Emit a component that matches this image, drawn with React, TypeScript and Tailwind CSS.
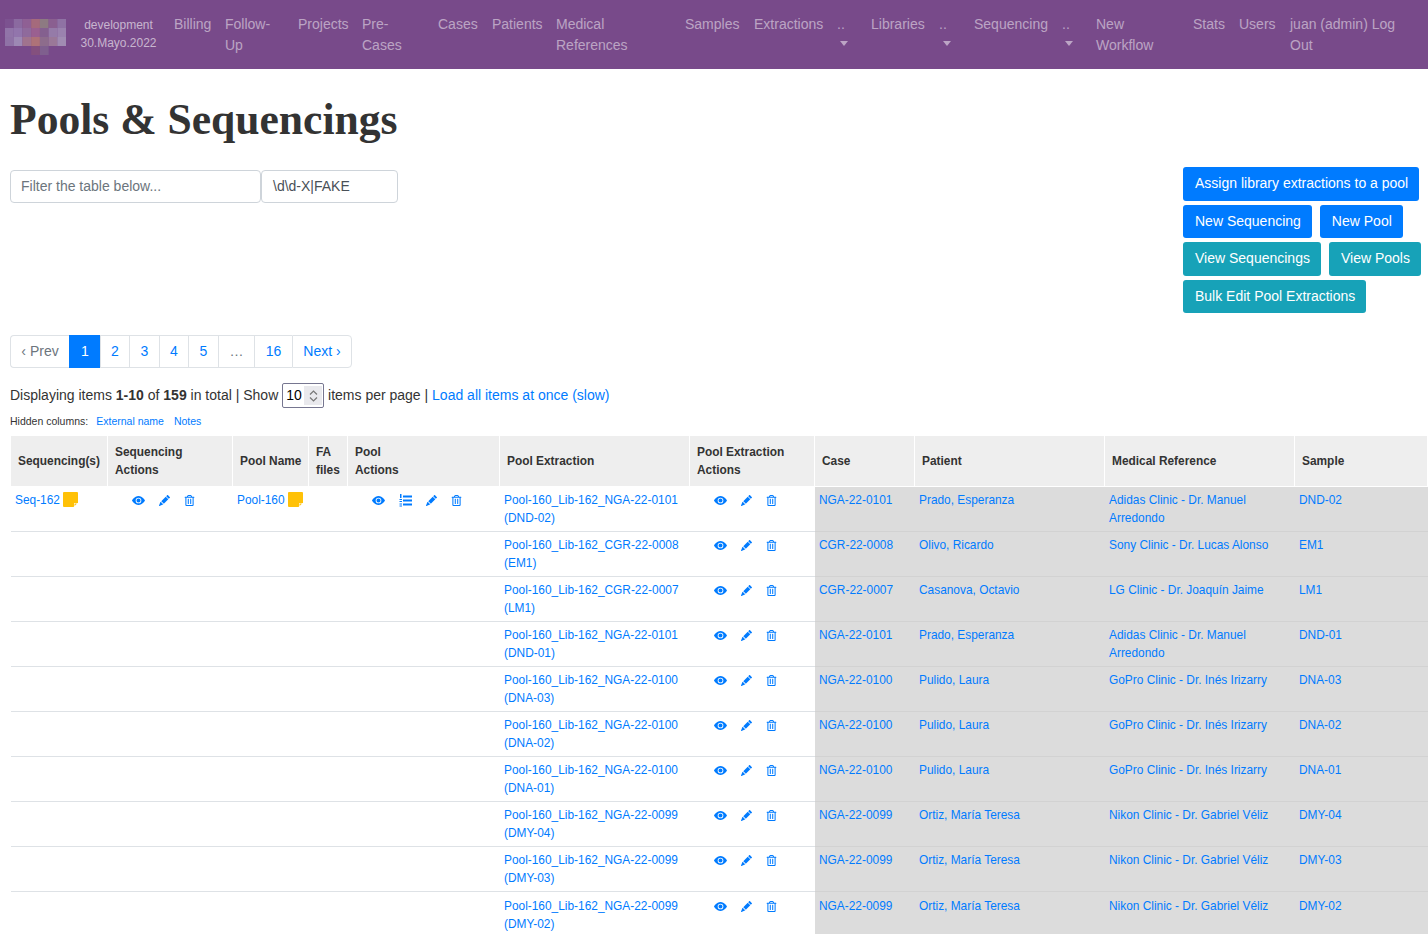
import React from "react";
import { BsEyeFill, BsPencilFill } from "react-icons/bs";
import { FaRegTrashAlt } from "react-icons/fa";

const nav: { label: string; cls: string; caret?: string }[] = [
  { label: "Billing", cls: "w-[51px]" },
  { label: "Follow-Up", cls: "w-[73px]" },
  { label: "Projects", cls: "w-[64px]" },
  { label: "Pre-Cases", cls: "w-[76px]" },
  { label: "Cases", cls: "w-[54px]" },
  { label: "Patients", cls: "w-[64px]" },
  { label: "Medical References", cls: "w-[129px]" },
  { label: "Samples", cls: "w-[69px]" },
  { label: "Extractions", cls: "w-[83px]" },
  { label: "..", cls: "w-[34px]", caret: "ml-[3px]" },
  { label: "Libraries", cls: "w-[68px]" },
  { label: "..", cls: "w-[35px]", caret: "ml-[4px]" },
  { label: "Sequencing", cls: "w-[88px]" },
  { label: "..", cls: "w-[34px]", caret: "ml-[3px]" },
  { label: "New Workflow", cls: "w-[97px]" },
  { label: "Stats", cls: "w-[46px]" },
  { label: "Users", cls: "w-[51px]" },
  { label: "juan (admin) Log Out", cls: "w-[138px]" },
];

const logo: (string | null)[][] = [
  ["#7c5290", "#8b6aa0", "#8f6094", "#a56a7c", "#8d7a82", "#8a5f90", "#8f72a4"],
  ["#9174a8", "#9275ac", "#8f6a9c", "#9a6090", "#84608f", "#957ba8", "#9a82ae"],
  ["#8f72a6", "#9d88b4", "#a0738e", "#ae7278", "#8d6c8c", "#9a7898", "#a08cb2"],
  [null, null, null, "#84507e", "#7f5f8e", null, null],
];

const rows = [
  ["Pool-160_Lib-162_NGA-22-0101", "DND-02", "NGA-22-0101", "Prado, Esperanza", "Adidas Clinic - Dr. Manuel Arredondo", "DND-02"],
  ["Pool-160_Lib-162_CGR-22-0008", "EM1", "CGR-22-0008", "Olivo, Ricardo", "Sony Clinic - Dr. Lucas Alonso", "EM1"],
  ["Pool-160_Lib-162_CGR-22-0007", "LM1", "CGR-22-0007", "Casanova, Octavio", "LG Clinic - Dr. Joaquín Jaime", "LM1"],
  ["Pool-160_Lib-162_NGA-22-0101", "DND-01", "NGA-22-0101", "Prado, Esperanza", "Adidas Clinic - Dr. Manuel Arredondo", "DND-01"],
  ["Pool-160_Lib-162_NGA-22-0100", "DNA-03", "NGA-22-0100", "Pulido, Laura", "GoPro Clinic - Dr. Inés Irizarry", "DNA-03"],
  ["Pool-160_Lib-162_NGA-22-0100", "DNA-02", "NGA-22-0100", "Pulido, Laura", "GoPro Clinic - Dr. Inés Irizarry", "DNA-02"],
  ["Pool-160_Lib-162_NGA-22-0100", "DNA-01", "NGA-22-0100", "Pulido, Laura", "GoPro Clinic - Dr. Inés Irizarry", "DNA-01"],
  ["Pool-160_Lib-162_NGA-22-0099", "DMY-04", "NGA-22-0099", "Ortiz, María Teresa", "Nikon Clinic - Dr. Gabriel Véliz", "DMY-04"],
  ["Pool-160_Lib-162_NGA-22-0099", "DMY-03", "NGA-22-0099", "Ortiz, María Teresa", "Nikon Clinic - Dr. Gabriel Véliz", "DMY-03"],
  ["Pool-160_Lib-162_NGA-22-0099", "DMY-02", "NGA-22-0099", "Ortiz, María Teresa", "Nikon Clinic - Dr. Gabriel Véliz", "DMY-02"],
];

const pages: { t: string; cls: string }[] = [
  { t: "‹ Prev", cls: "w-[59px] text-[#6c757d] rounded-l" },
  { t: "1", cls: "w-[31px] bg-[#007bff] text-white !border-[#007bff]" },
  { t: "2", cls: "w-[29px] text-[#007bff]" },
  { t: "3", cls: "w-[30px] text-[#007bff]" },
  { t: "4", cls: "w-[29px] text-[#007bff]" },
  { t: "5", cls: "w-[30px] text-[#007bff]" },
  { t: "…", cls: "w-[36px] text-[#6c757d]" },
  { t: "16", cls: "w-[38px] text-[#007bff]" },
  { t: "Next ›", cls: "w-[60px] text-[#007bff] border-r rounded-r" },
];

function Note() {
  return (
    <svg width="15" height="15" viewBox="0 0 15 15" className="block ml-[3px] mt-[-2px] shrink-0">
      <path d="M0 1a1 1 0 0 1 1-1h13a1 1 0 0 1 1 1v9.500l-4.500 4.500H1a1 1 0 0 1-1-1z" fill="#ffc107" />
      <path d="M11 15v-4h4z" fill="#fff" />
      <path d="M11.500 14v-2.500H14z" fill="#ffc107" />
    </svg>
  );
}

function ListIcon() {
  return (
    <svg width="13" height="13" viewBox="0 0 13 13" fill="#007bff">
      <rect x="4" y="1.500" width="9" height="2" />
      <rect x="4" y="5.500" width="9" height="2" />
      <rect x="4" y="9.500" width="9" height="2" />
      <rect x="1" y="0" width="1.500" height="4" />
      <rect x="0.500" y="5" width="2.500" height="1" />
      <rect x="0.500" y="7" width="2.500" height="1" />
      <rect x="0.500" y="9.500" width="2.500" height="1" />
      <rect x="0.500" y="11.500" width="2.500" height="1" />
    </svg>
  );
}

function Actions({ list }: { list?: boolean }) {
  const cell = "w-[25.500px] flex justify-center";
  return (
    <div className="flex items-center h-[18px] pl-[14px] text-[#007bff]">
      <span className={cell}><BsEyeFill size={13} /></span>
      {list && <span className="w-[27px] flex justify-center"><ListIcon /></span>}
      <span className={cell}><BsPencilFill size={11} /></span>
      <span className={cell}><FaRegTrashAlt size={11} /></span>
    </div>
  );
}

const thBase = "bg-[#eeeeee] border-r border-b border-white text-left align-middle font-bold pl-[7px] pr-[4px] py-0 leading-[18px] text-[#333]";

function Btn({ children, teal }: { children: React.ReactNode; teal?: boolean }) {
  return (
    <a className={`h-[33.500px] pl-[12px] pr-[11px] rounded-[3px] text-white text-[14px] flex items-center whitespace-nowrap ${teal ? "bg-[#17a2b8]" : "bg-[#007bff]"}`}>
      {children}
    </a>
  );
}

const heads: React.ReactNode[] = [
  "Sequencing(s)",
  "Sequencing Actions",
  "Pool Name",
  "FA files",
  <>Pool<br />Actions</>,
  "Pool Extraction",
  "Pool Extraction Actions",
  "Case",
  "Patient",
  "Medical Reference",
  "Sample",
];

export default function App() {
  const font = { fontFamily: '"Liberation Sans", Arial, sans-serif' };
  return (
    <div className="w-[1428px] h-[934px] overflow-hidden bg-white text-[#333] text-[14px]" style={font}>
      <nav className="h-[69px] bg-[#784a8a] flex items-start">
        <div className="w-[167px] h-full flex items-start shrink-0">
          <svg width="61" height="36" viewBox="0 0 61 36" className="ml-[5px] mt-[19px] shrink-0">
            {logo.map((r, y) =>
              r.map((c, x) => (c ? <rect key={`${x}-${y}`} x={x * 8.72} y={y * 9} width="8.8" height="9" fill={c} /> : null))
            )}
          </svg>
          <div className="w-[100px] ml-[4px] mt-[16px] text-center text-[12px] leading-[18px] text-white/60">
            <div>development</div>
            <div>30.Mayo.2022</div>
          </div>
        </div>
        {nav.map((n, i) => (
          <a key={i} className={`${n.cls} shrink-0 px-[7px] pt-[14px] leading-[21px] text-white/50 text-[14px]`}>
            {n.label}
            {n.caret && <span className={`${n.caret} block w-0 h-0 mt-[6px] border-x-[4px] border-x-transparent border-t-[5px] border-t-white/50`} />}
          </a>
        ))}
      </nav>

      <main className="pl-[10px]">
        <h1 className="mt-[23px] h-[54px] text-[43.600px] leading-[54px] font-bold text-[#333] font-['Liberation_Serif',serif] whitespace-nowrap">
          Pools &amp; Sequencings
        </h1>

        <div className="flex justify-between mt-[21px] h-[146px] pr-[7px]">
          <div className="flex pt-[4px] h-fit mt-[-1px]">
            <div className="w-[251px] h-[33px] border border-[#ced4da] rounded-[4px] pl-[10px] flex items-center text-[#6c757d]">Filter the table below...</div>
            <div className="w-[137px] h-[33px] border border-[#ced4da] rounded-[4px] pl-[11px] flex items-center text-[#495057]">\d\d-X|FAKE</div>
          </div>
          <div className="w-[238px] flex flex-col gap-[4px]">
            <div className="flex"><Btn>Assign library extractions to a pool</Btn></div>
            <div className="flex gap-[8px]"><Btn>New Sequencing</Btn><Btn>New Pool</Btn></div>
            <div className="flex gap-[8px]"><Btn teal>View Sequencings</Btn><Btn teal>View Pools</Btn></div>
            <div className="flex"><Btn teal>Bulk Edit Pool Extractions</Btn></div>
          </div>
        </div>

        <div className="flex h-[33px] mt-[22px]">
          {pages.map((p, i) => (
            <span key={i} className={`${p.cls} h-[33px] flex items-center justify-center border-y border-l border-[#dee2e6]`}>{p.t}</span>
          ))}
        </div>

        <div className="flex items-center h-[25px] mt-[15px] whitespace-pre">
          <span>Displaying items <b>1-10</b> of <b>159</b> in total | Show </span>
          <span className="w-[42px] h-[25px] border border-[#767690] rounded-[2px] flex items-center pl-[3px] text-black">
            10
            <span className="w-[18px] h-[19px] ml-auto mr-[1px] bg-[#e9e9ed] flex flex-col items-center justify-center gap-[2px]">
              <svg width="9" height="5" viewBox="0 0 9 5"><path d="M1 4.500 4.500 1 8 4.500" fill="none" stroke="#777" strokeWidth="1.200" /></svg>
              <svg width="9" height="5" viewBox="0 0 9 5"><path d="M1 .5 4.500 4 8 .5" fill="none" stroke="#777" strokeWidth="1.200" /></svg>
            </span>
          </span>
          <span> items per page | </span>
          <a className="text-[#007bff]">Load all items at once (slow)</a>
        </div>

        <div className="flex items-center h-[14px] mt-[7px] text-[10.500px] whitespace-nowrap">
          <span>Hidden columns:</span>
          <a className="text-[#007bff] ml-[8px]">External name</a>
          <a className="text-[#007bff] ml-[10px]">Notes</a>
        </div>

        <table className="mt-[7px] ml-[1px] w-[1417px] table-fixed border-separate border-spacing-0 text-[11.900px] leading-[18px]">
          <colgroup>
            <col className="w-[97px]" />
            <col className="w-[125px]" />
            <col className="w-[76px]" />
            <col className="w-[39px]" />
            <col className="w-[152px]" />
            <col className="w-[190px]" />
            <col className="w-[125px]" />
            <col className="w-[100px]" />
            <col className="w-[190px]" />
            <col className="w-[190px]" />
            <col className="w-[133px]" />
          </colgroup>
          <thead>
            <tr className="h-[51px]">
              {heads.map((h, i) => (
                <th key={i} className={thBase}>{h}</th>
              ))}
            </tr>
          </thead>
          <tbody className="text-[#007bff]">
            {rows.map((r, i) => {
              const td = `align-top px-[4px] ${i === 9 ? "pt-[5px]" : "pt-[4px]"} pb-[4px] border-b border-[#dee2e6]`;
              const gr = `${td} bg-[#dcdcdc] !border-[#d2d2d2]`;
              return (
                <tr key={i}>
                  <td className={td}>{i === 0 && <span className="flex items-center h-[18px] whitespace-nowrap">Seq-162<Note /></span>}</td>
                  <td className={td}>{i === 0 && <Actions />}</td>
                  <td className={td}>{i === 0 && <span className="flex items-center h-[18px] whitespace-nowrap">Pool-160<Note /></span>}</td>
                  <td className={td}></td>
                  <td className={td}>{i === 0 && <Actions list />}</td>
                  <td className={td}>{r[0]} ({r[1]})</td>
                  <td className={td}><Actions /></td>
                  <td className={gr}>{r[2]}</td>
                  <td className={gr}>{r[3]}</td>
                  <td className={gr}>{r[4]}</td>
                  <td className={gr}>{r[5]}</td>
                </tr>
              );
            })}
          </tbody>
        </table>
      </main>
    </div>
  );
}
